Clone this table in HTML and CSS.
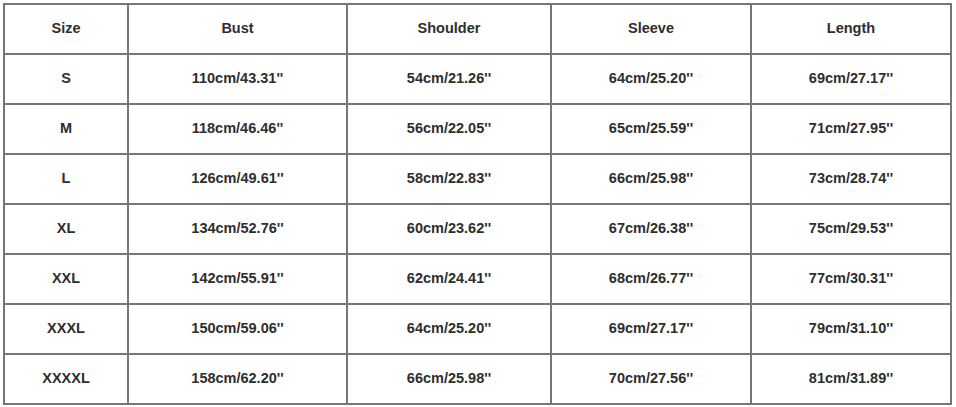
FILE: index.html
```html
<!DOCTYPE html>
<html>
<head>
<meta charset="utf-8">
<link rel="stylesheet" href="styles.css">
</head>
<body>
<table class="size-table">
  <colgroup>
    <col class="c-size"><col class="c-bust"><col class="c-shoulder"><col class="c-sleeve"><col class="c-length">
  </colgroup>
  <tr><th>Size</th><th>Bust</th><th>Shoulder</th><th>Sleeve</th><th>Length</th></tr>
  <tr><td>S</td><td>110cm/43.31''</td><td>54cm/21.26''</td><td>64cm/25.20''</td><td>69cm/27.17''</td></tr>
  <tr><td>M</td><td>118cm/46.46''</td><td>56cm/22.05''</td><td>65cm/25.59''</td><td>71cm/27.95''</td></tr>
  <tr><td>L</td><td>126cm/49.61''</td><td>58cm/22.83''</td><td>66cm/25.98''</td><td>73cm/28.74''</td></tr>
  <tr><td>XL</td><td>134cm/52.76''</td><td>60cm/23.62''</td><td>67cm/26.38''</td><td>75cm/29.53''</td></tr>
  <tr><td>XXL</td><td>142cm/55.91''</td><td>62cm/24.41''</td><td>68cm/26.77''</td><td>77cm/30.31''</td></tr>
  <tr><td>XXXL</td><td>150cm/59.06''</td><td>64cm/25.20''</td><td>69cm/27.17''</td><td>79cm/31.10''</td></tr>
  <tr><td>XXXXL</td><td>158cm/62.20''</td><td>66cm/25.98''</td><td>70cm/27.56''</td><td>81cm/31.89''</td></tr>
</table>
</body>
</html>
```
FILE: styles.css
```css
html, body {
  margin: 0;
  padding: 0;
  background: #ffffff;
}
body {
  padding: 3px 0 0 3px;
  font-family: "Liberation Sans", Arial, sans-serif;
}
.size-table {
  border-collapse: collapse;
  table-layout: fixed;
  width: 949px;
  color: #2e2e2e;
  font-size: 14.5px;
}
.c-size { width: 124px; }
.c-bust { width: 219px; }
.c-shoulder { width: 204px; }
.c-sleeve { width: 200px; }
.c-length { width: 200px; }
.size-table th,
.size-table td {
  border: 2px solid #777777;
  height: 46px;
  padding: 0 0 2px 0;
  text-align: center;
  vertical-align: middle;
  font-weight: bold;
}
```
